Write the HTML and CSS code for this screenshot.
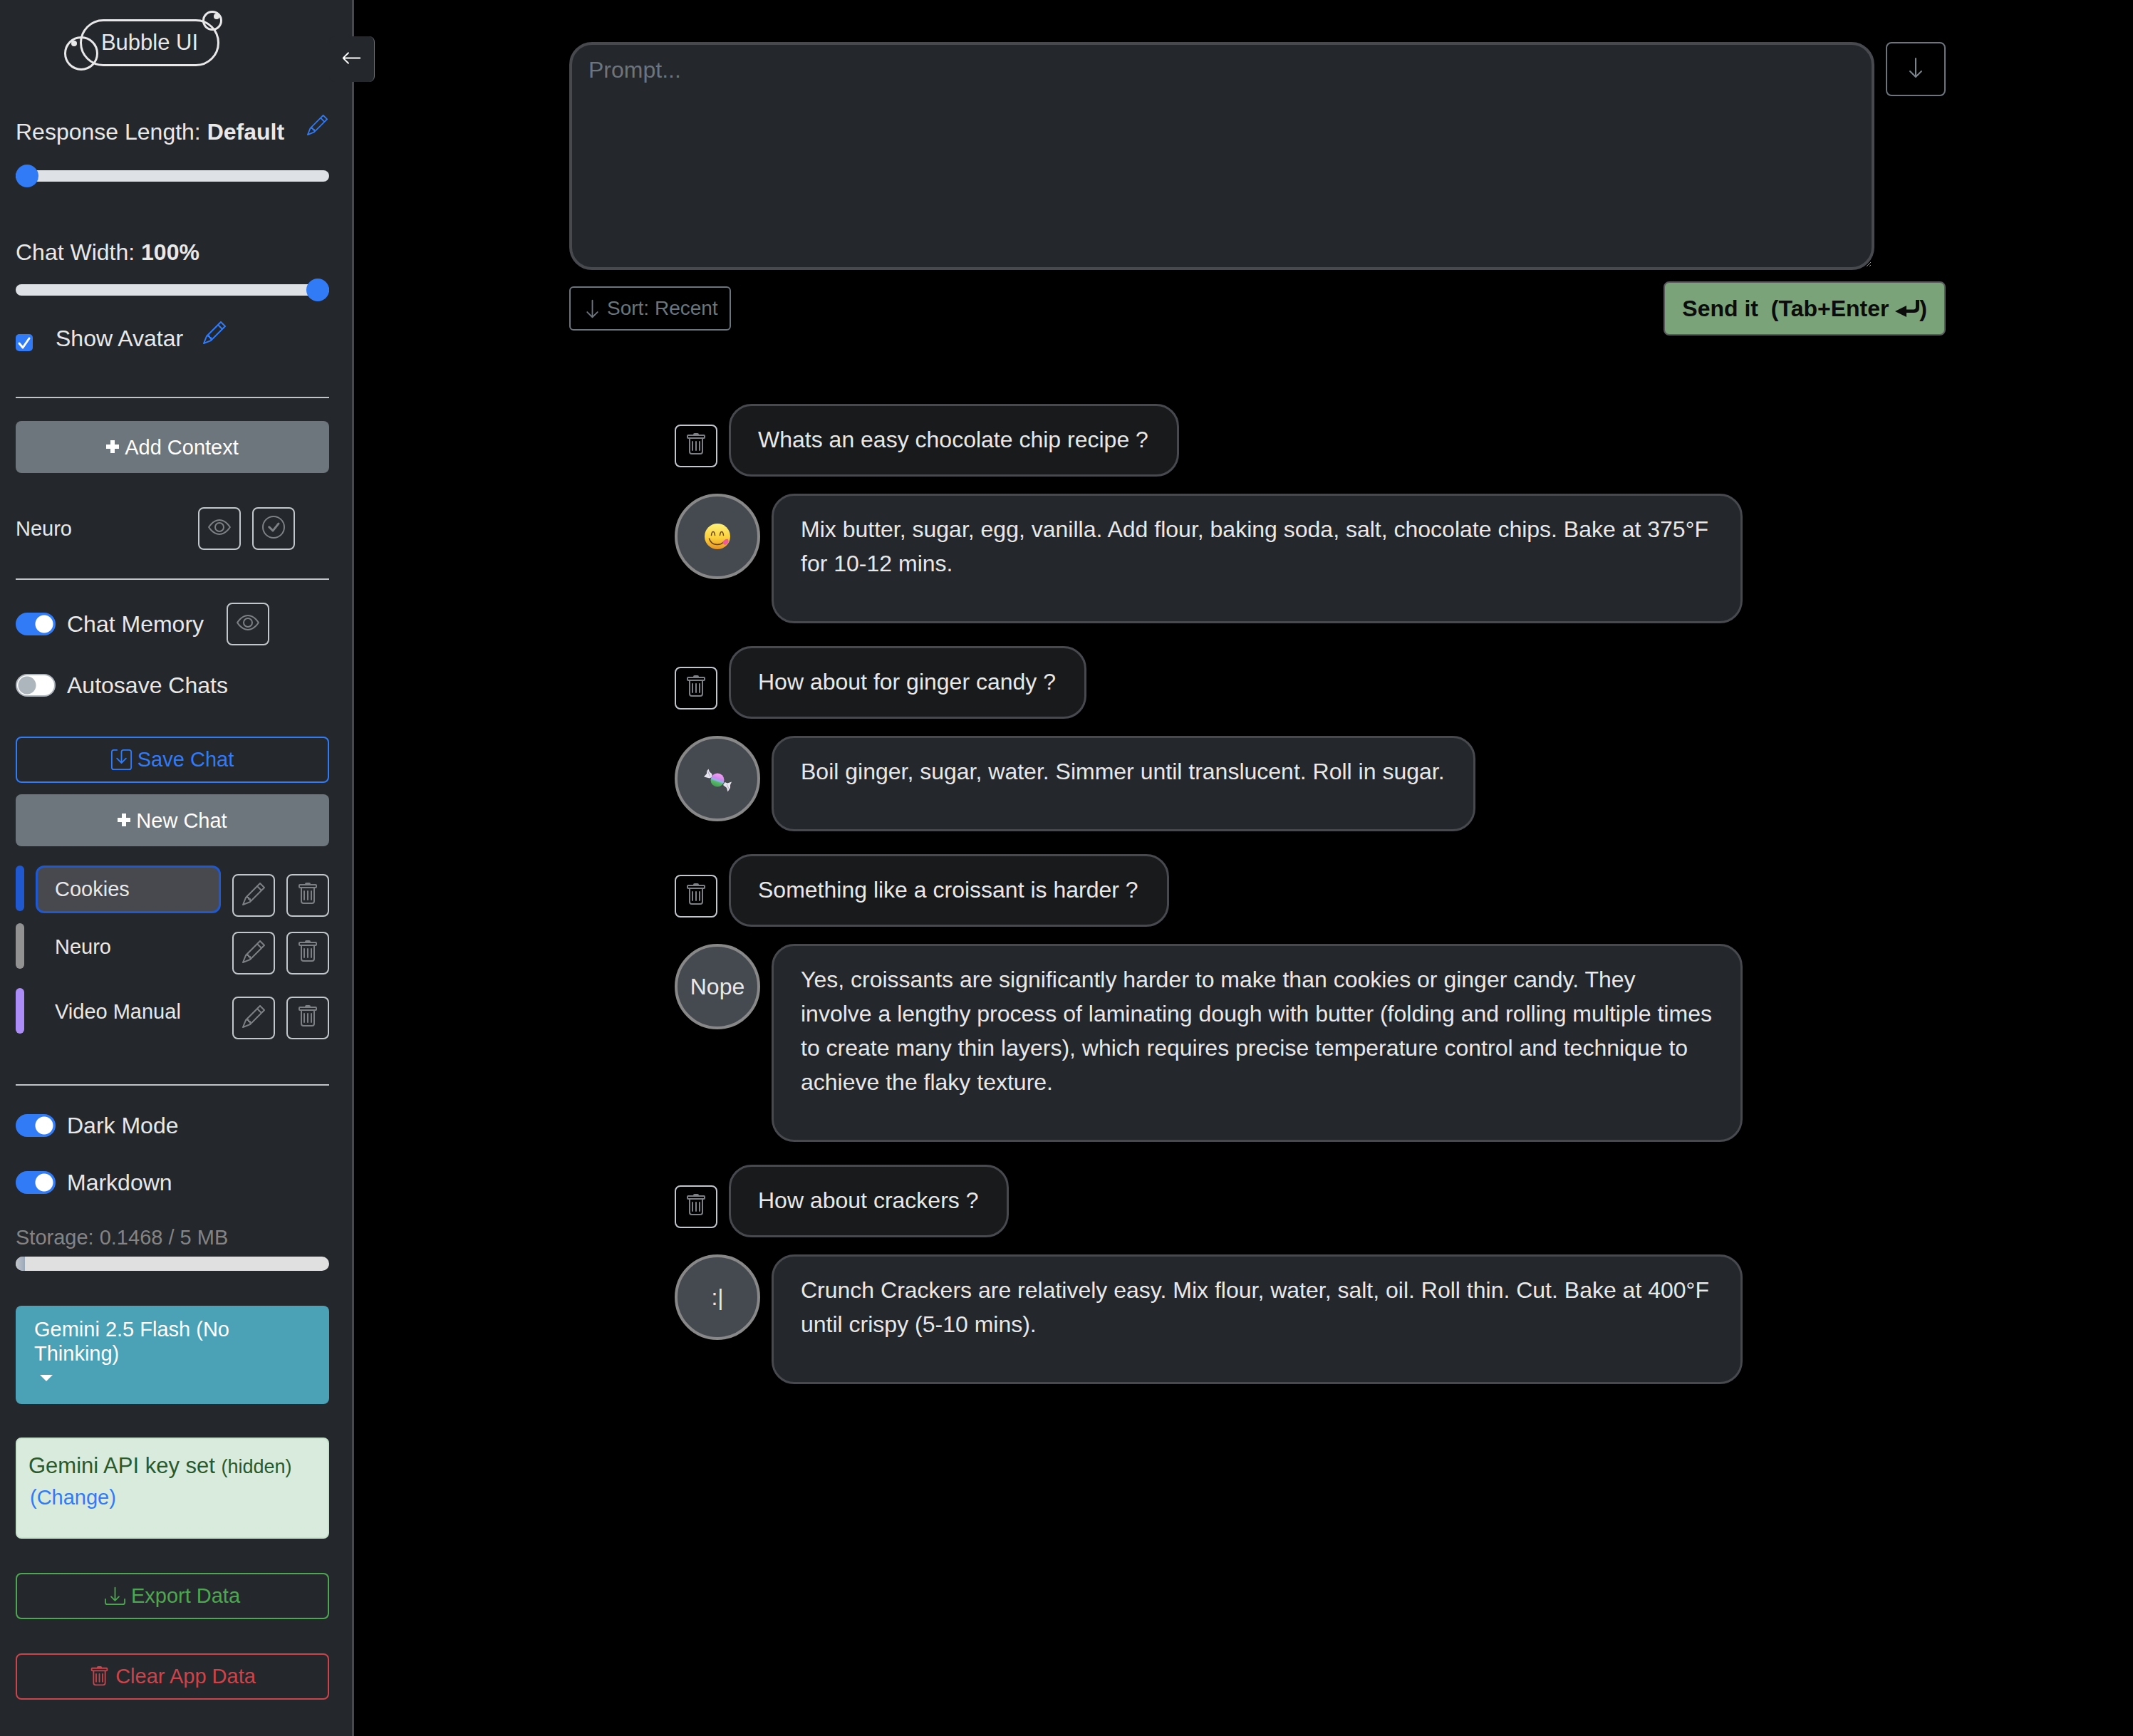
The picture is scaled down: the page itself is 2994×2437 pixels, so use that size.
FILE: index.html
```html
<!DOCTYPE html>
<html lang="en">
<head>
<meta charset="utf-8">
<meta name="viewport" content="width=device-width, initial-scale=1">
<title>Bubble UI</title>
<link rel="stylesheet" href="styles.css">
</head>
<body>
<svg class="sprite" aria-hidden="true">
  <symbol id="i-pencil" viewBox="0 0 16 16"><path d="M12.146.146a.5.5 0 0 1 .708 0l3 3a.5.5 0 0 1 0 .708l-10 10a.5.5 0 0 1-.168.11l-5 2a.5.5 0 0 1-.65-.65l2-5a.5.5 0 0 1 .11-.168zM11.207 2.5 13.5 4.793 14.793 3.5 12.5 1.207zm1.586 3L10.5 3.207 4 9.707V10h.5a.5.5 0 0 1 .5.5v.5h.5a.5.5 0 0 1 .5.5v.5h.293zm-9.761 5.175-.106.106-1.528 3.821 3.821-1.528.106-.106A.5.5 0 0 1 5 12.5V12h-.5a.5.5 0 0 1-.5-.5V11h-.5a.5.5 0 0 1-.468-.325"/></symbol>
  <symbol id="i-trash" viewBox="0 0 16 16"><path d="M5.5 5.5A.5.5 0 0 1 6 6v6a.5.5 0 0 1-1 0V6a.5.5 0 0 1 .5-.5m2.5 0a.5.5 0 0 1 .5.5v6a.5.5 0 0 1-1 0V6a.5.5 0 0 1 .5-.5m3 .5a.5.5 0 0 0-1 0v6a.5.5 0 0 0 1 0z"/><path d="M14.5 3a1 1 0 0 1-1 1H13v9a2 2 0 0 1-2 2H5a2 2 0 0 1-2-2V4h-.5a1 1 0 0 1-1-1V2a1 1 0 0 1 1-1H6a1 1 0 0 1 1-1h2a1 1 0 0 1 1 1h3.5a1 1 0 0 1 1 1zM4.118 4 4 4.059V13a1 1 0 0 0 1 1h6a1 1 0 0 0 1-1V4.059L11.882 4zM2.5 3h11V2h-11z"/></symbol>
  <symbol id="i-eye" viewBox="0 0 16 16"><path d="M16 8s-3-5.5-8-5.5S0 8 0 8s3 5.5 8 5.5S16 8 16 8M1.173 8a13 13 0 0 1 1.66-2.043C4.12 4.668 5.88 3.5 8 3.5s3.879 1.168 5.168 2.457A13 13 0 0 1 14.828 8q-.086.13-.195.288c-.335.48-.83 1.12-1.465 1.755C11.879 11.332 10.119 12.5 8 12.5s-3.879-1.168-5.168-2.457A13 13 0 0 1 1.172 8z"/><path d="M8 5.5a2.5 2.5 0 1 0 0 5 2.5 2.5 0 0 0 0-5M4.5 8a3.5 3.5 0 1 1 7 0 3.5 3.5 0 0 1-7 0"/></symbol>
  <symbol id="i-check" viewBox="0 0 16 16"><path d="M8 15A7 7 0 1 1 8 1a7 7 0 0 1 0 14m0 1A8 8 0 1 0 8 0a8 8 0 0 0 0 16"/><path d="m10.97 4.97-.02.022-3.473 4.425-2.093-2.094a.75.75 0 0 0-1.06 1.06L6.97 11.03a.75.75 0 0 0 1.079-.02l3.992-4.99a.75.75 0 0 0-1.071-1.05"/></symbol>
  <symbol id="i-save" viewBox="0 0 16 16"><path d="M2 1a1 1 0 0 0-1 1v12a1 1 0 0 0 1 1h12a1 1 0 0 0 1-1V2a1 1 0 0 0-1-1H9.5a1 1 0 0 0-1 1v7.293l2.646-2.647a.5.5 0 0 1 .708.708l-3.5 3.5a.5.5 0 0 1-.708 0l-3.5-3.5a.5.5 0 1 1 .708-.708L7.5 9.293V2a2 2 0 0 1 2-2H14a2 2 0 0 1 2 2v12a2 2 0 0 1-2 2H2a2 2 0 0 1-2-2V2a2 2 0 0 1 2-2h2.5a.5.5 0 0 1 0 1z"/></symbol>
  <symbol id="i-download" viewBox="0 0 16 16"><path d="M.5 9.9a.5.5 0 0 1 .5.5v2.5a1 1 0 0 0 1 1h12a1 1 0 0 0 1-1v-2.5a.5.5 0 0 1 1 0v2.5a2 2 0 0 1-2 2H2a2 2 0 0 1-2-2v-2.5a.5.5 0 0 1 .5-.5"/><path d="M7.646 11.854a.5.5 0 0 0 .708 0l3-3a.5.5 0 0 0-.708-.708L8.5 10.293V1.5a.5.5 0 0 0-1 0v8.793L5.354 8.146a.5.5 0 1 0-.708.708z"/></symbol>
  <symbol id="i-left" viewBox="0 0 16 16"><path d="M15 8a.5.5 0 0 0-.5-.5H2.707l3.147-3.146a.5.5 0 1 0-.708-.708l-4 4a.5.5 0 0 0 0 .708l4 4a.5.5 0 0 0 .708-.708L2.707 8.5H14.5A.5.5 0 0 0 15 8"/></symbol>
  <symbol id="i-down" viewBox="0 0 16 16"><path d="M8 1a.5.5 0 0 1 .5.5v11.793l3.146-3.147a.5.5 0 0 1 .708.708l-4 4a.5.5 0 0 1-.708 0l-4-4a.5.5 0 0 1 .708-.708L7.5 13.293V1.5A.5.5 0 0 1 8 1"/></symbol>
  <symbol id="i-plus" viewBox="0 0 18 18"><path d="M6 0h6v6h6v6h-6v6H6v-6H0V6h6z"/></symbol>
  <symbol id="i-return" viewBox="0 0 34 24"><path d="M0 16 16 8v5.500h10q3 0 3-3V0h5v11q0 7-7 7H16v6z"/></symbol>
</svg>

<div class="app">
  <aside class="sidebar">
    <button class="collapse" type="button" aria-label="Collapse sidebar"><svg class="icon icon-sm"><use href="#i-left"/></svg></button>

    <div class="logo">Bubble UI<span class="bubble bubble-lg"></span><span class="bubble bubble-sm"></span></div>

    <div class="setting-head">
      <label for="response-length">Response Length: <b>Default</b></label>
      <button class="link-btn" type="button" aria-label="Edit response length"><svg class="icon icon-sm"><use href="#i-pencil"/></svg></button>
    </div>
    <input class="range range-length" id="response-length" type="range" min="0" max="100" value="0">

    <label class="width-label" for="chat-width">Chat Width: <b>100%</b></label>
    <input class="range range-width" id="chat-width" type="range" min="0" max="100" value="100">

    <div class="avatar-row">
      <input class="check" id="show-avatar" type="checkbox" checked>
      <label for="show-avatar">Show Avatar</label>
      <button class="link-btn" type="button" aria-label="Edit avatar"><svg class="icon"><use href="#i-pencil"/></svg></button>
    </div>

    <hr class="rule rule-settings">

    <button class="btn btn-solid" type="button"><svg class="icon-plus"><use href="#i-plus"/></svg>Add Context</button>

    <div class="context-row">
      <span class="context-name">Neuro</span>
      <button class="icon-btn" type="button" aria-label="View context"><svg class="icon"><use href="#i-eye"/></svg></button>
      <button class="icon-btn" type="button" aria-label="Use context"><svg class="icon"><use href="#i-check"/></svg></button>
    </div>

    <hr class="rule">

    <div class="switch-row switch-memory">
      <input class="switch" id="memory" type="checkbox" checked>
      <label for="memory">Chat Memory</label>
      <button class="icon-btn" type="button" aria-label="View memory"><svg class="icon"><use href="#i-eye"/></svg></button>
    </div>
    <div class="switch-row">
      <input class="switch" id="autosave" type="checkbox">
      <label for="autosave">Autosave Chats</label>
    </div>

    <div class="chat-actions">
      <button class="btn btn-outline btn-save" type="button"><svg class="icon icon-sm"><use href="#i-save"/></svg>Save Chat</button>
      <button class="btn btn-solid" type="button"><svg class="icon-plus"><use href="#i-plus"/></svg>New Chat</button>
    </div>

    <ul class="chat-list">
      <li class="chat-item">
        <span class="tag tag-blue"></span>
        <button class="chat-name active" type="button">Cookies</button>
        <button class="icon-btn" type="button" aria-label="Rename Cookies"><svg class="icon"><use href="#i-pencil"/></svg></button>
        <button class="icon-btn" type="button" aria-label="Delete Cookies"><svg class="icon"><use href="#i-trash"/></svg></button>
      </li>
      <li class="chat-item">
        <span class="tag tag-grey"></span>
        <button class="chat-name" type="button">Neuro</button>
        <button class="icon-btn" type="button" aria-label="Rename Neuro"><svg class="icon"><use href="#i-pencil"/></svg></button>
        <button class="icon-btn" type="button" aria-label="Delete Neuro"><svg class="icon"><use href="#i-trash"/></svg></button>
      </li>
      <li class="chat-item chat-item-last">
        <span class="tag tag-violet"></span>
        <button class="chat-name" type="button">Video Manual</button>
        <button class="icon-btn" type="button" aria-label="Rename Video Manual"><svg class="icon"><use href="#i-pencil"/></svg></button>
        <button class="icon-btn" type="button" aria-label="Delete Video Manual"><svg class="icon"><use href="#i-trash"/></svg></button>
      </li>
    </ul>

    <hr class="rule rule-chats">

    <div class="switch-row">
      <input class="switch" id="dark" type="checkbox" checked>
      <label for="dark">Dark Mode</label>
    </div>
    <div class="switch-row">
      <input class="switch" id="markdown" type="checkbox" checked>
      <label for="markdown">Markdown</label>
    </div>

    <div class="storage">
      <span>Storage: 0.1468 / 5 MB</span>
      <div class="meter"><div class="meter-fill" style="width: 3%"></div></div>
    </div>

    <button class="model" type="button" aria-haspopup="listbox">Gemini 2.5 Flash (No Thinking)<span class="caret"></span></button>

    <div class="key-note">
      <p>Gemini API key set <small>(hidden)</small><br><a href="#change">(Change)</a></p>
    </div>

    <button class="btn btn-outline btn-export" type="button"><svg class="icon icon-sm"><use href="#i-download"/></svg>Export Data</button>
    <button class="btn btn-outline btn-clear" type="button"><svg class="icon icon-sm"><use href="#i-trash"/></svg>Clear App Data</button>
  </aside>

  <main class="main">
    <form class="composer">
      <div class="composer-top">
        <textarea class="prompt" placeholder="Prompt..." aria-label="Prompt"></textarea>
        <button class="down-btn" type="button" aria-label="Scroll down"><svg class="icon"><use href="#i-down"/></svg></button>
      </div>
      <div class="composer-bar">
        <button class="sort-btn" type="button"><svg class="icon icon-sm"><use href="#i-down"/></svg>Sort: Recent</button>
        <button class="send-btn" type="button">Send it&nbsp; (Tab+Enter&nbsp;<svg class="icon-return"><use href="#i-return"/></svg>)</button>
      </div>
    </form>

    <section class="chat">
      <div class="question">
        <button class="icon-btn" type="button" aria-label="Delete message"><svg class="icon"><use href="#i-trash"/></svg></button>
        <div class="msg msg-user">Whats an easy chocolate chip recipe ?</div>
      </div>
      <div class="answer">
        <div class="avatar">
          <svg class="emoji" viewBox="0 0 40 40" role="img" aria-label="Face savoring food">
            <defs><linearGradient id="face" x1="0" y1="0" x2="0" y2="1"><stop offset="0" stop-color="#fff27a"/><stop offset=".55" stop-color="#fbd03c"/><stop offset="1" stop-color="#e79422"/></linearGradient></defs>
            <circle cx="20" cy="20" r="18" fill="url(#face)"/>
            <path d="M11.500 18.500q.5-5 2.500-5t2.500 5M23.500 18.500q.5-5 2.500-5t2.500 5" fill="none" stroke="#6b4413" stroke-width="1.500" stroke-linecap="round"/>
            <path d="M8.500 23q2.500 8.500 11.500 8.500 5 0 8-3" fill="none" stroke="#6b4413" stroke-width="1.500" stroke-linecap="round"/>
            <path d="M27.500 27.500q2.500-3.500 6.500-4 2 1 1.500 4-1.500 4-5 4.500-3-1-3-4.500z" fill="#f0589a"/>
          </svg>
        </div>
        <div class="msg msg-bot"><p>Mix butter, sugar, egg, vanilla. Add flour, baking soda, salt, chocolate chips. Bake at 375°F for 10-12 mins.</p></div>
      </div>

      <div class="question">
        <button class="icon-btn" type="button" aria-label="Delete message"><svg class="icon"><use href="#i-trash"/></svg></button>
        <div class="msg msg-user">How about for ginger candy ?</div>
      </div>
      <div class="answer">
        <div class="avatar">
          <svg class="emoji" viewBox="0 0 40 40" role="img" aria-label="Candy">
            <defs><linearGradient id="candy" x1=".7" y1="0" x2=".35" y2="1"><stop offset="0" stop-color="#f7a6f2"/><stop offset=".4" stop-color="#d287ee"/><stop offset=".55" stop-color="#8fb4ea"/><stop offset=".65" stop-color="#58b96a"/><stop offset="1" stop-color="#3f9a50"/></linearGradient></defs>
            <path d="M1 17.500 5 13 5 9.500 7.500 6.500 9 10.500 12.500 13.500 12 18 9 19.500z" fill="#e6e4ee"/>
            <path d="M28 29 30.500 25 34 26.500 40 24.500 38 29 38 33 34.500 38.500 33 33z" fill="#e6e4ee"/>
            <path d="M6 9 10 17M33 28 36 34" stroke="#b3b1c2" fill="none"/>
            <circle cx="20" cy="22" r="9.500" fill="url(#candy)"/>
          </svg>
        </div>
        <div class="msg msg-bot"><p>Boil ginger, sugar, water. Simmer until translucent. Roll in sugar.</p></div>
      </div>

      <div class="question">
        <button class="icon-btn" type="button" aria-label="Delete message"><svg class="icon"><use href="#i-trash"/></svg></button>
        <div class="msg msg-user">Something like a croissant is harder ?</div>
      </div>
      <div class="answer">
        <div class="avatar">Nope</div>
        <div class="msg msg-bot"><p>Yes, croissants are significantly harder to make than cookies or ginger candy. They involve a lengthy process of laminating dough with butter (folding and rolling multiple times to create many thin layers), which requires precise temperature control and technique to achieve the flaky texture.</p></div>
      </div>

      <div class="question">
        <button class="icon-btn" type="button" aria-label="Delete message"><svg class="icon"><use href="#i-trash"/></svg></button>
        <div class="msg msg-user">How about crackers ?</div>
      </div>
      <div class="answer">
        <div class="avatar">:|</div>
        <div class="msg msg-bot"><p>Crunch Crackers are relatively easy. Mix flour, water, salt, oil. Roll thin. Cut. Bake at 400°F until crispy (5-10 mins).</p></div>
      </div>
    </section>
  </main>
</div>
</body>
</html>
```
FILE: styles.css
```css
:root {
  --panel: #24272c;
  --line: #47494f;
  --text: #e8e8e8;
  --muted: #6c757d;
  --blue: #317bf7;
}

* { box-sizing: border-box; }

body {
  margin: 0;
  background: #000;
  color: var(--text);
  font: 32px/48px "Liberation Sans", Arial, sans-serif;
}

button {
  margin: 0;
  padding: 0;
  border: 0;
  background: none;
  color: inherit;
  font: inherit;
  cursor: pointer;
}

svg { display: block; flex: none; fill: currentColor; }
.sprite { position: absolute; width: 0; height: 0; }
.icon { width: 32px; height: 32px; }
.icon-sm { width: 29px; height: 29px; }
.icon-plus { width: 18px; height: 18px; margin-bottom: 4px; }

.app { display: flex; min-height: 100vh; }

/* Sidebar */
.sidebar {
  position: relative;
  flex: none;
  display: flex;
  flex-direction: column;
  width: 497px;
  padding: 27px 32px 48px 22px;
  border-right: 3px solid var(--line);
  background: var(--panel);
}

.collapse {
  position: absolute;
  top: 51px;
  right: -32px;
  display: flex;
  align-items: center;
  justify-content: center;
  width: 64px;
  height: 64px;
  padding-bottom: 3px;
  border-right: 1px solid #6c6e72;
  border-radius: 8px;
  background: var(--panel);
  color: #fff;
}

.logo {
  position: relative;
  width: 196px;
  margin-left: 90px;
  padding: 6px 0;
  border: 3px solid var(--text);
  border-radius: 33px;
  font-size: 31px;
  text-align: center;
}
.bubble {
  position: absolute;
  border: 3px solid var(--text);
  border-radius: 50%;
}
.bubble::after {
  content: "";
  position: absolute;
  width: 8px;
  height: 8px;
  border-radius: 50%;
  background: var(--text);
}
.bubble-lg { left: -25px; top: 21px; width: 48px; height: 48px; }
.bubble-lg::after { left: 7px; top: 3px; }
.bubble-sm { right: -7px; top: -15px; width: 28px; height: 28px; }
.bubble-sm::after { right: 1px; top: 1px; }

.setting-head {
  display: flex;
  justify-content: space-between;
  align-items: flex-start;
  margin-top: 68px;
  padding-right: 2px;
}
.link-btn { color: var(--blue); }

.range {
  appearance: none;
  width: 100%;
  height: 48px;
  margin: 0;
  background: transparent;
}
.range::-webkit-slider-runnable-track {
  height: 16px;
  border-radius: 8px;
  background: #dee2e6;
}
.range::-webkit-slider-thumb {
  appearance: none;
  width: 32px;
  height: 32px;
  margin-top: -8px;
  border-radius: 50%;
  background: var(--blue);
}
.range-length { margin-top: 14px; }
.width-label { margin-top: 59px; }
.range-width { margin-top: 5px; }

.avatar-row { display: flex; align-items: flex-start; margin-top: 20px; }
.avatar-row label { margin: 0 28px 0 32px; }
.check {
  appearance: none;
  width: 24px;
  height: 24px;
  margin: 18px 0 0;
  border-radius: 5px;
  background: var(--blue) url("data:image/svg+xml,%3Csvg xmlns='http://www.w3.org/2000/svg' viewBox='0 0 24 24'%3E%3Cpath d='M5 13l5 6 9-13' fill='none' stroke='%23fff' stroke-width='3' stroke-linecap='round' stroke-linejoin='round'/%3E%3C/svg%3E");
}

.rule {
  width: 100%;
  height: 2px;
  margin: 40px 0 32px;
  border: 0;
  background: #c1c5c9;
}
.rule-settings { margin-top: 58px; }
.rule-chats { margin-top: 63px; }

.btn {
  display: flex;
  align-items: center;
  justify-content: center;
  gap: 8px;
  width: 100%;
  border-radius: 8px;
  font-size: 29px;
  line-height: 43px;
}
.btn-solid { padding: 16px 0 14px; background: #6d757d; color: #fff; }
.btn-outline { padding: 9px 0; border: 2px solid; }
.btn-save { color: var(--blue); }
.btn-export { margin-top: 48px; color: #4fa652; }
.btn-clear { margin-top: 48px; color: #cb444a; }

.icon-btn {
  flex: none;
  display: flex;
  justify-content: center;
  align-items: flex-start;
  width: 60px;
  height: 60px;
  padding-top: 10px;
  border: 2px solid #c1c7cc;
  border-radius: 8px;
  color: #7d8084;
}

.context-row {
  display: flex;
  align-items: center;
  gap: 16px;
  margin: 48px 48px 0 0;
  font-size: 29px;
  line-height: 43px;
}
.context-name { flex: 1; }

.switch-row {
  display: flex;
  align-items: center;
  gap: 16px;
}
.switch-row + .switch-row { margin-top: 32px; }
.switch-memory label { margin-right: 16px; }
.switch {
  appearance: none;
  width: 56px;
  height: 32px;
  margin: 0;
  border: 2px solid #adb5bd;
  border-radius: 16px;
  background: #fff radial-gradient(circle at 14px 14px, #adb5bd 12px, transparent 13px);
}
.switch:checked {
  border-color: var(--blue);
  background: var(--blue) radial-gradient(circle at 38px 14px, #fff 12px, transparent 13px);
}

.chat-actions { display: flex; flex-direction: column; gap: 16px; margin-top: 48px; }

.chat-list {
  display: flex;
  flex-direction: column;
  gap: 9px;
  margin: 27px 0 0;
  padding: 0;
  list-style: none;
}
.chat-item { display: flex; align-items: flex-start; gap: 16px; }
.chat-item-last { margin-top: 10px; }
.chat-item .icon-btn { margin-top: 12px; }
.tag { flex: none; width: 12px; height: 64px; border-radius: 6px; }
.tag-blue { background: #1f58cf; }
.tag-grey { background: #929292; }
.tag-violet { background: #ac8df7; }
.chat-name {
  flex: 1;
  padding: 9px 24px;
  border: 3px solid transparent;
  border-radius: 12px;
  font-size: 29px;
  line-height: 43px;
  text-align: left;
}
.chat-name.active { border-color: #1f58cf; background: var(--line); }

.storage {
  margin-top: 32px;
  color: #848484;
  font-size: 29px;
  line-height: 43px;
}
.meter {
  height: 20px;
  margin-top: 5px;
  border-radius: 10px;
  background: #e0e0e0;
  overflow: hidden;
}
.meter-fill { height: 100%; background: linear-gradient(90deg, #c3c7cd, #9ba8b9); }

.model {
  width: 100%;
  margin-top: 49px;
  padding: 16px 26px 20px;
  border-radius: 8px;
  background: #4ba1b5;
  color: #fff;
  font-size: 29px;
  line-height: 34px;
  text-align: left;
}
.caret { display: flex; align-items: center; height: 34px; padding-left: 8px; }
.caret::before {
  content: "";
  border: 9px solid transparent;
  border-top-color: #fff;
  border-bottom: 0;
}

.key-note {
  margin-top: 47px;
  padding: 16px 16px 34px;
  border: 2px solid #c8e3cc;
  border-radius: 8px;
  background: #d9ebdc;
  color: #2a5a2c;
  font-size: 31px;
  line-height: 44px;
}
.key-note p { margin: 0; }
.key-note small { font-size: 27px; line-height: 1; }
.key-note a { padding-left: 2px; color: var(--blue); font-size: 29px; line-height: 1; text-decoration: none; }

/* Main column */
.main { flex: 1; min-width: 0; }

.composer { padding: 59px 263px 0 302px; }
.composer-top { display: flex; align-items: flex-start; gap: 16px; }
.prompt {
  flex: 1;
  display: block;
  height: 320px;
  margin: 0;
  padding: 11px 23px;
  border: 4px solid var(--line);
  border-radius: 32px;
  background: var(--panel);
  color: var(--text);
  font: inherit;
  resize: vertical;
}
.prompt::placeholder { color: var(--muted); }
.down-btn {
  flex: none;
  display: flex;
  justify-content: center;
  width: 84px;
  height: 76px;
  padding-top: 18px;
  border: 2px solid var(--muted);
  border-radius: 8px;
  color: #7c848c;
}
.composer-bar {
  display: flex;
  align-items: center;
  justify-content: space-between;
  margin-top: 16px;
}
.sort-btn {
  display: flex;
  align-items: center;
  gap: 6px;
  padding: 8px 16px;
  border: 2px solid var(--muted);
  border-radius: 6px;
  color: var(--muted);
  font-size: 28px;
  line-height: 42px;
}
.send-btn {
  display: flex;
  align-items: center;
  padding: 12px 24px;
  border: 2px solid #5a5a5e;
  border-radius: 8px;
  background: #7ba379;
  color: #0c0c0c;
  font-weight: bold;
}
.icon-return { width: 34px; height: 24px; }

.chat { padding: 96px 548px 80px 450px; }
.question, .answer { display: flex; align-items: flex-start; gap: 16px; }
.question .icon-btn { margin-top: 29px; }
.answer { margin-top: 24px; }
.answer + .question { margin-top: 32px; }
.msg {
  padding: 23px 40px 25px 38px;
  border: 3px solid var(--line);
  border-radius: 32px;
}
.msg-user { background: #191a1c; }
.msg-bot { background: var(--panel); }
.msg-bot p { margin: 0 0 32px; }
.avatar {
  flex: none;
  display: flex;
  align-items: center;
  justify-content: center;
  width: 120px;
  height: 120px;
  border: 4px solid #888;
  border-radius: 50%;
  background: #454950;
}
.emoji { width: 40px; height: 40px; }
```
